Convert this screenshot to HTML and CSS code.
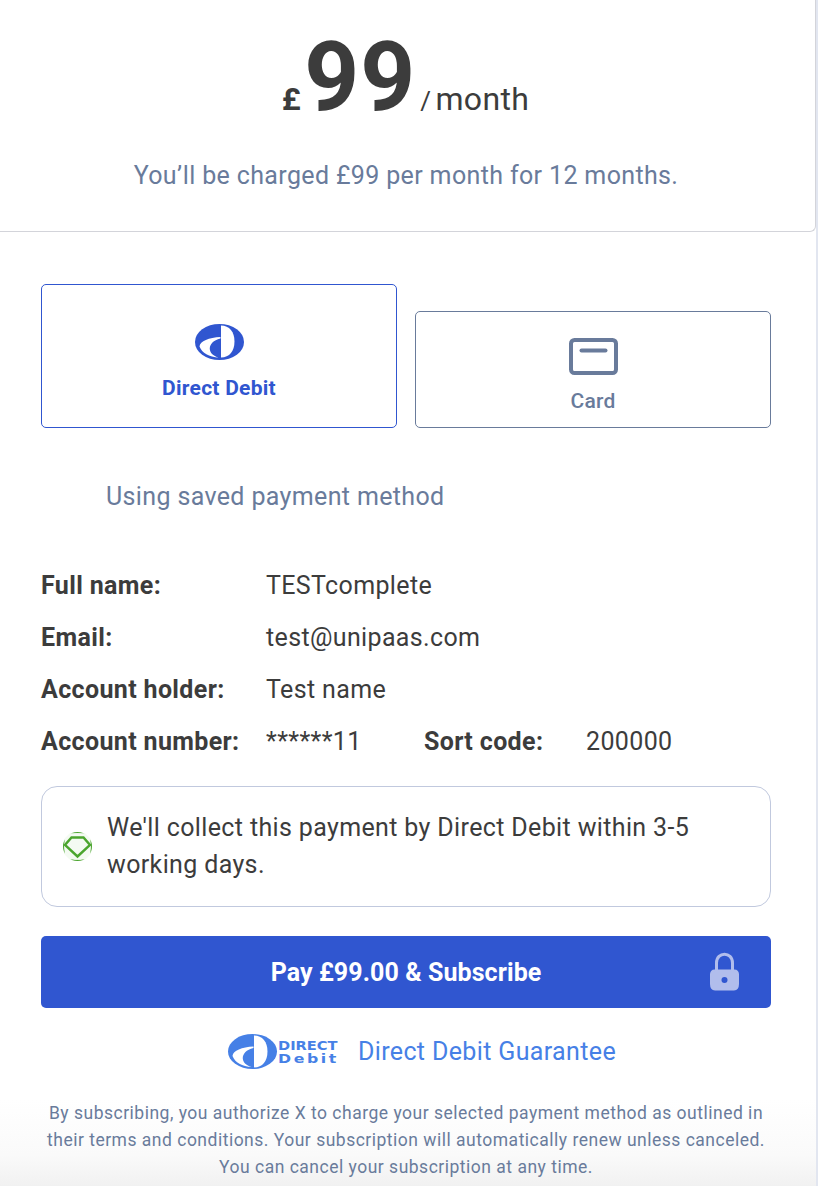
FILE: index.html
```html
<!DOCTYPE html>
<html lang="en">

<head>
	<meta charset="UTF-8">
	<meta name="viewport" content="width=device-width, initial-scale=1.0">
	<title>Checkout</title>
	<link rel="stylesheet" href="styles.css">
</head>

<body>
	<div class="page">
		<div class="summary">
			<div class="price">
				<span class="currency">£</span>
				<span class="amount">99</span>
				<span class="slash">/</span>
				<span class="period">month</span>
			</div>
			<p class="charge-note">You’ll be charged £99 per month for 12 months.</p>
		</div>

		<div class="checkout">
			<div class="methods">
				<div class="method method-active">
					<svg class="debit-icon" width="49" height="36" viewBox="0 0 49 36">
						<ellipse cx="24.5" cy="18" rx="24.5" ry="18" fill="currentColor" />
						<path d="M26 1.500C34.500 1.500 39.500 8 39.500 17.500S34.500 33.500 26 33.500z" fill="#fff" />
						<path d="M25.500 13C14 13.500 5 17 4.500 22.500C7 29 14 33 24 33.500C12 31 11 18 25.500 14.500z" fill="#fff" />
					</svg>
					<span>Direct Debit</span>
				</div>
				<div class="method method-card">
					<svg class="card-icon" width="49" height="37" viewBox="0 0 49 37" fill="none" stroke="currentColor">
						<rect x="2" y="2" width="45" height="33" rx="3.500" stroke-width="4" />
						<path d="M12.500 12.500H36.500" stroke-width="4" stroke-linecap="round" />
					</svg>
					<span>Card</span>
				</div>
			</div>

			<p class="saved">Using saved payment method</p>

			<div class="details">
				<div class="row"><b>Full name:</b><span>TESTcomplete</span></div>
				<div class="row"><b>Email:</b><span>test@unipaas.com</span></div>
				<div class="row"><b>Account holder:</b><span>Test name</span></div>
				<div class="row">
					<b>Account number:</b><span class="number">******11</span>
					<b class="sort">Sort code:</b><span>200000</span>
				</div>
			</div>

			<div class="notice">
				<svg class="gem" width="29" height="29" viewBox="0 0 29 29" fill="none" stroke="#4ba52e">
					<circle cx="14.500" cy="14.500" r="13.900" stroke-width="1.200" />
					<rect x="1.500" y="1.200" width="26" height="26.300" fill="#f4faf2" stroke="none" />
					<path d="M8.500 5.500H20.500L27 13L14.500 24.500L2 13z" stroke-width="2.400" />
					<path d="M0 0H8L0 8zM29 0H21L29 8zM0 29V21L8 29zM29 29V21L21 29z" fill="#fff" stroke="none" />
				</svg>
				<p>We'll collect this payment by Direct Debit within 3-5 working days.</p>
			</div>

			<button class="pay">
				Pay £99.00 &amp; Subscribe
				<svg class="lock" width="29" height="39" viewBox="0 0 29 39">
					<path d="M6.500 20V11C6.500 -.8 22.500 -.8 22.500 11V20" fill="none" stroke="#b1bdec" stroke-width="3" />
					<path d="M4.500 17.500H24.500Q28.500 17.500 29 22V32Q29 38 24 38.500H5Q0 38 0 32V22Q.5 17.500 4.500 17.500z" fill="#b1bdec" />
					<circle cx="14.500" cy="28" r="3" fill="#3056d0" />
				</svg>
			</button>

			<div class="guarantee">
				<svg class="debit-logo" width="110" height="36" viewBox="0 0 110 36" fill="currentColor">
					<ellipse cx="24.500" cy="17.500" rx="24.500" ry="17.500" />
					<path d="M26 1.500C34.500 1.500 39.500 8 39.500 17.500S34.500 33.500 26 33.500z" fill="#fff" />
					<path d="M25.500 12.500C14 13 5 16.500 4.500 22C7 28.500 14 32.500 24 33C12 30.500 11 17.500 25.500 14z" fill="#fff" />
					<text x="50" y="16" textLength="59.500" lengthAdjust="spacingAndGlyphs">DIRECT</text>
					<text class="wide" x="50" y="28.500" textLength="61" lengthAdjust="spacingAndGlyphs">Debit</text>
				</svg>
				<a>Direct Debit Guarantee</a>
			</div>

			<p class="terms">By subscribing, you authorize X to charge your selected payment method as outlined in<br>their terms and conditions. Your subscription will automatically renew unless canceled.<br>You can cancel your subscription at any time.</p>
		</div>
	</div>
</body>

</html>
```
FILE: styles.css
```css
* {
	box-sizing: border-box;
}
body {
	margin: 0;
	font-family: Roboto, "Liberation Sans", sans-serif;
	font-size: 25px;
	letter-spacing: 0.36px;
	color: #3c3c3c;
}
p {
	margin: 0;
}
.page {
	height: 1186px;
	overflow: hidden;
	border-right: 2px solid #e2e6f0;
	background: linear-gradient(#fff 1100px, #fafafa 1155px, #f1f1f1);
}

.summary {
	height: 232px;
	padding: 29px 5px 0 0;
	border: 1px solid #d3d4da;
	border-width: 0 1px 1px 0;
	border-radius: 0 0 6px 0;
	background: #fff;
	text-align: center;
}
.price {
	display: flex;
	justify-content: center;
	align-items: baseline;
	height: 96px;
	padding-left: 1px;
	line-height: 96px;
	font-size: 32px;
}
.currency {
	margin-right: 3px;
	font-weight: 700;
}
.amount {
	font-size: 96px;
	font-weight: 700;
	letter-spacing: 1px;
}
.slash {
	margin-left: 4px;
	font-size: 26px;
}
.period {
	margin-left: 4px;
}
.charge-note {
	margin-top: 36px;
	padding-left: 2px;
	line-height: 30px;
	color: #697b9b;
}

.checkout {
	padding: 52px 45px 0 41px;
}
.methods {
	display: flex;
	align-items: flex-end;
	gap: 18px;
	height: 144px;
}
.method {
	display: flex;
	flex: 1;
	flex-direction: column;
	align-items: center;
	height: 117px;
	padding-top: 26px;
	border: 1px solid #697b9b;
	border-radius: 5px;
	background: #fff;
	color: #697b9b;
	font-size: 21px;
	font-weight: 500;
	line-height: 24px;
	letter-spacing: 0.25px;
}
.method span {
	margin-top: 14px;
}
.method-active {
	height: 144px;
	padding-top: 39px;
	border-color: #3056d0;
	color: #3056d0;
	font-weight: 700;
}
.method-active span {
	margin-top: 16px;
}

.saved {
	margin: 54px 0 0 65px;
	line-height: 30px;
	color: #697b9b;
}

.details {
	margin-top: 48px;
}
.row {
	display: flex;
	height: 52px;
	line-height: 52px;
}
.row b {
	width: 225px;
}
.row .number {
	width: 158px;
}
.row .sort {
	width: 162px;
}

.notice {
	display: flex;
	align-items: center;
	gap: 15px;
	height: 121px;
	margin-top: 18px;
	padding: 0 60px 1px 21px;
	border: 1px solid #c1c9de;
	border-radius: 16px;
	line-height: 37px;
}
.gem {
	flex: none;
}

.pay {
	position: relative;
	display: block;
	width: 100%;
	height: 72px;
	margin-top: 29px;
	padding: 0;
	border: 0;
	border-radius: 5px;
	background: #3056d0;
	color: #fff;
	font: inherit;
	font-weight: 700;
	letter-spacing: 0.08px;
}
.lock {
	position: absolute;
	top: 16px;
	right: 32px;
}

.guarantee {
	display: flex;
	gap: 20px;
	height: 36px;
	margin: 26px 0 0 187px;
	line-height: 36px;
	color: #4680e6;
}
.debit-logo text {
	font-family: "DejaVu Sans", sans-serif;
	font-size: 12px;
	font-weight: 700;
	letter-spacing: 0;
}
.debit-logo .wide {
	font-size: 12px;
	letter-spacing: 2px;
}

.terms {
	margin-top: 30px;
	font-size: 17.5px;
	line-height: 27px;
	letter-spacing: 0.5px;
	color: #697b9b;
	text-align: center;
	white-space: nowrap;
}
```
